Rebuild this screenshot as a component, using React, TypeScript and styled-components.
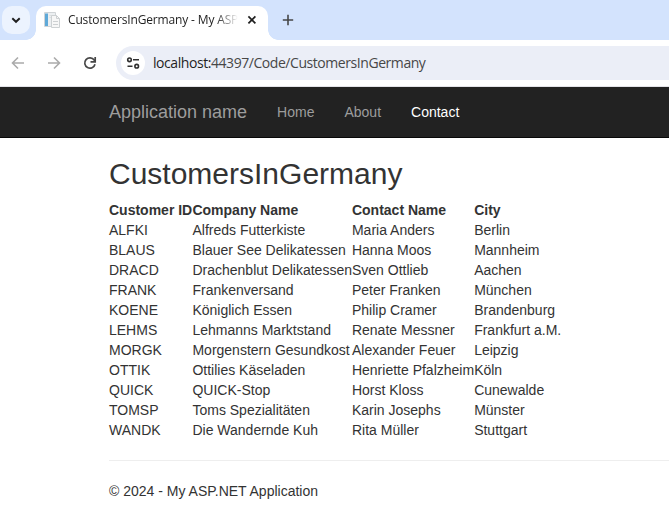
import React from "react";
import styled, { createGlobalStyle } from "styled-components";

const GlobalStyle = createGlobalStyle`
  * { box-sizing: border-box; }
  html, body { margin: 0; padding: 0; background: #fff; overflow: hidden; }
  body {
    font-family: "Liberation Sans", Arial, sans-serif;
    font-size: 14px;
    line-height: 20px;
    color: #333;
  }
`;

const Window = styled.div`
  width: 669px;
  height: 514px;
  overflow: hidden;
`;

const TabStrip = styled.div`
  height: 40px;
  display: flex;
  align-items: flex-start;
  background: #d3e3fd;
`;

const TabSearch = styled.div`
  width: 28px;
  height: 28px;
  margin: 6px 6px 0 2px;
  border-radius: 10px;
  background: #ecf3fe;
  display: flex;
  align-items: center;
  justify-content: center;
`;

const Tab = styled.div`
  position: relative;
  width: 232px;
  height: 34px;
  margin-top: 6px;
  padding: 0 11px 6px 8px;
  border-radius: 10px 10px 0 0;
  background: #fff;
  display: flex;
  align-items: center;

  &::before,
  &::after {
    content: "";
    position: absolute;
    bottom: 0;
    width: 10px;
    height: 10px;
  }
  &::before {
    left: -10px;
    background: radial-gradient(circle at 0 0, transparent 9.5px, #fff 10px);
  }
  &::after {
    right: -10px;
    background: radial-gradient(circle at 100% 0, transparent 9.5px, #fff 10px);
  }
`;

const TabTitle = styled.div`
  width: 170px;
  margin-left: 7px;
  white-space: nowrap;
  font: 12px/18px "Open Sans", "Noto Sans", sans-serif;
  letter-spacing: -0.15px;
  color: #1f1f1f;
  mask-image: linear-gradient(to right, #000 148px, transparent 170px);
`;

const CloseButton = styled.div`
  display: flex;
  margin-left: auto;
`;

const NewTab = styled.div`
  display: flex;
  margin: 14px 0 0 14px;
`;

const Toolbar = styled.div`
  height: 47px;
  padding-left: 10px;
  border-bottom: 1px solid #e3e3e8;
  display: flex;
  align-items: center;
  background: #fff;
`;

const ToolButton = styled.div`
  width: 36px;
  display: flex;
`;

const AddressBar = styled.div`
  flex: 1;
  height: 34px;
  margin-left: -2px;
  padding-left: 5px;
  border-radius: 17px 0 0 17px;
  background: #ebeef7;
  display: flex;
  align-items: center;
`;

const SiteInfo = styled.div`
  width: 24px;
  height: 24px;
  border-radius: 50%;
  background: #fff;
  display: flex;
  align-items: center;
  justify-content: center;
`;

const Url = styled.div`
  margin-left: 8px;
  font: 14px/20px "Open Sans", "Noto Sans", sans-serif;
  letter-spacing: -0.44px;
  color: #474747;
  white-space: nowrap;
`;

const UrlHost = styled.span`
  color: #1f1f1f;
`;

const Navbar = styled.nav`
  height: 51px;
  padding-left: 109px;
  border-bottom: 1px solid #080808;
  background: #222;
  display: flex;
  align-items: center;
`;

const Brand = styled.span`
  margin-right: 15px;
  font-size: 18px;
  color: #9d9d9d;
`;

const NavLink = styled.span<{ $active?: boolean }>`
  padding: 0 15px;
  color: ${(p) => (p.$active ? "#fff" : "#9d9d9d")};
`;

const Content = styled.main`
  padding: 20px 0 0 109px;
`;

const Title = styled.h2`
  margin: 0 0 10px;
  font-size: 30px;
  line-height: 32px;
  font-weight: 500;
`;

const Table = styled.table`
  width: 453px;
  table-layout: fixed;
  border-collapse: collapse;
  white-space: nowrap;
`;

const Column = styled.col<{ $width: number }>`
  width: ${(p) => p.$width}px;
`;

const HeaderCell = styled.th`
  padding: 0;
  text-align: left;
  font-weight: 700;
`;

const Cell = styled.td`
  padding: 0;
`;

const Divider = styled.hr`
  margin: 20px 0;
  border: 0;
  border-top: 1px solid #eee;
`;

const columns = [
  { label: "Customer ID", width: 83.45 },
  { label: "Company Name", width: 159.5 },
  { label: "Contact Name", width: 122.2 },
  { label: "City", width: 87.85 },
];

const customers = [
  ["ALFKI", "Alfreds Futterkiste", "Maria Anders", "Berlin"],
  ["BLAUS", "Blauer See Delikatessen", "Hanna Moos", "Mannheim"],
  ["DRACD", "Drachenblut Delikatessen", "Sven Ottlieb", "Aachen"],
  ["FRANK", "Frankenversand", "Peter Franken", "München"],
  ["KOENE", "Königlich Essen", "Philip Cramer", "Brandenburg"],
  ["LEHMS", "Lehmanns Marktstand", "Renate Messner", "Frankfurt a.M."],
  ["MORGK", "Morgenstern Gesundkost", "Alexander Feuer", "Leipzig"],
  ["OTTIK", "Ottilies Käseladen", "Henriette Pfalzheim", "Köln"],
  ["QUICK", "QUICK-Stop", "Horst Kloss", "Cunewalde"],
  ["TOMSP", "Toms Spezialitäten", "Karin Josephs", "Münster"],
  ["WANDK", "Die Wandernde Kuh", "Rita Müller", "Stuttgart"],
];

const ChevronIcon = () => (
  <svg width="10" height="8" viewBox="0 0 10 8" fill="none" stroke="#1f1f1f" strokeWidth="1.9">
    <path d="M1.3 2.2 5 5.8 8.7 2.2" />
  </svg>
);

const PageIcon = () => (
  <svg width="17" height="16" viewBox="0 0 17 16">
    <path d="M.5.5h11v14H.5z" fill="#eceff1" stroke="#d0d4d7" />
    <path d="M1 1.5h3v12.5H1z" fill="#5fa9d8" />
    <path d="M5.5 3.5h4M5.5 5.5h3" stroke="#dcdfe1" />
    <path d="M7.5 3.5h5l3 3v9h-8z" fill="#f7f7f7" stroke="#cdd1d3" />
    <path d="M12.5 3.5v3h3M9 9.5h5M9 12.5h5" fill="none" stroke="#cdd0d2" />
  </svg>
);

const CloseIcon = () => (
  <svg width="10" height="10" viewBox="0 0 10 10" stroke="#1f1f1f" strokeWidth="1.7">
    <path d="m1.4 1.4 7 7m0-7-7 7" />
  </svg>
);

const PlusIcon = () => (
  <svg width="12" height="12" viewBox="0 0 12 12" stroke="#474747" strokeWidth="1.6">
    <path d="M6 .8v10.4M.8 6h10.4" />
  </svg>
);

const ArrowIcon = ({ forward = false }: { forward?: boolean }) => (
  <svg width="16" height="16" viewBox="0 0 16 16" fill="none" stroke="#ababab" strokeWidth="1.6">
    <path d={forward ? "M2 8h11M8 2.5 13.5 8 8 13.5" : "M14 8H3M8 2.5 2.5 8 8 13.5"} />
  </svg>
);

const ReloadIcon = () => (
  <svg width="16" height="16" viewBox="0 0 16 16" fill="none" stroke="#474747" strokeWidth="1.7">
    <path d="M13 9.2A5.2 5.2 0 1 1 12.2 5L13 6.2" />
    <path d="M13.2 2v4.8H8.5" />
  </svg>
);

const TuneIcon = () => (
  <svg width="14" height="12" viewBox="0 0 14 12" fill="none" stroke="#303030" strokeWidth="1.6">
    <circle cx="3.5" cy="2.8" r="1.8" />
    <path d="M7 2.8h6M1.5 9.2h5" />
    <circle cx="10.7" cy="9.2" r="1.8" />
  </svg>
);

export default function App() {
  return (
    <Window>
      <GlobalStyle />
      <TabStrip>
        <TabSearch><ChevronIcon /></TabSearch>
        <Tab>
          <PageIcon />
          <TabTitle>CustomersInGermany - My ASP.</TabTitle>
          <CloseButton><CloseIcon /></CloseButton>
        </Tab>
        <NewTab><PlusIcon /></NewTab>
      </TabStrip>
      <Toolbar>
        <ToolButton><ArrowIcon /></ToolButton>
        <ToolButton><ArrowIcon forward /></ToolButton>
        <ToolButton><ReloadIcon /></ToolButton>
        <AddressBar>
          <SiteInfo><TuneIcon /></SiteInfo>
          <Url><UrlHost>localhost:</UrlHost>44397/Code/CustomersInGermany</Url>
        </AddressBar>
      </Toolbar>
      <Navbar>
        <Brand>Application name</Brand>
        <NavLink>Home</NavLink>
        <NavLink>About</NavLink>
        <NavLink $active>Contact</NavLink>
      </Navbar>
      <Content>
        <Title>CustomersInGermany</Title>
        <Table>
          <colgroup>
            {columns.map((c) => <Column key={c.label} $width={c.width} />)}
          </colgroup>
          <thead>
            <tr>{columns.map((c) => <HeaderCell key={c.label}>{c.label}</HeaderCell>)}</tr>
          </thead>
          <tbody>
            {customers.map((row) => (
              <tr key={row[0]}>
                {row.map((value) => <Cell key={value}>{value}</Cell>)}
              </tr>
            ))}
          </tbody>
        </Table>
        <Divider />
        <footer>© 2024 - My ASP.NET Application</footer>
      </Content>
    </Window>
  );
}
